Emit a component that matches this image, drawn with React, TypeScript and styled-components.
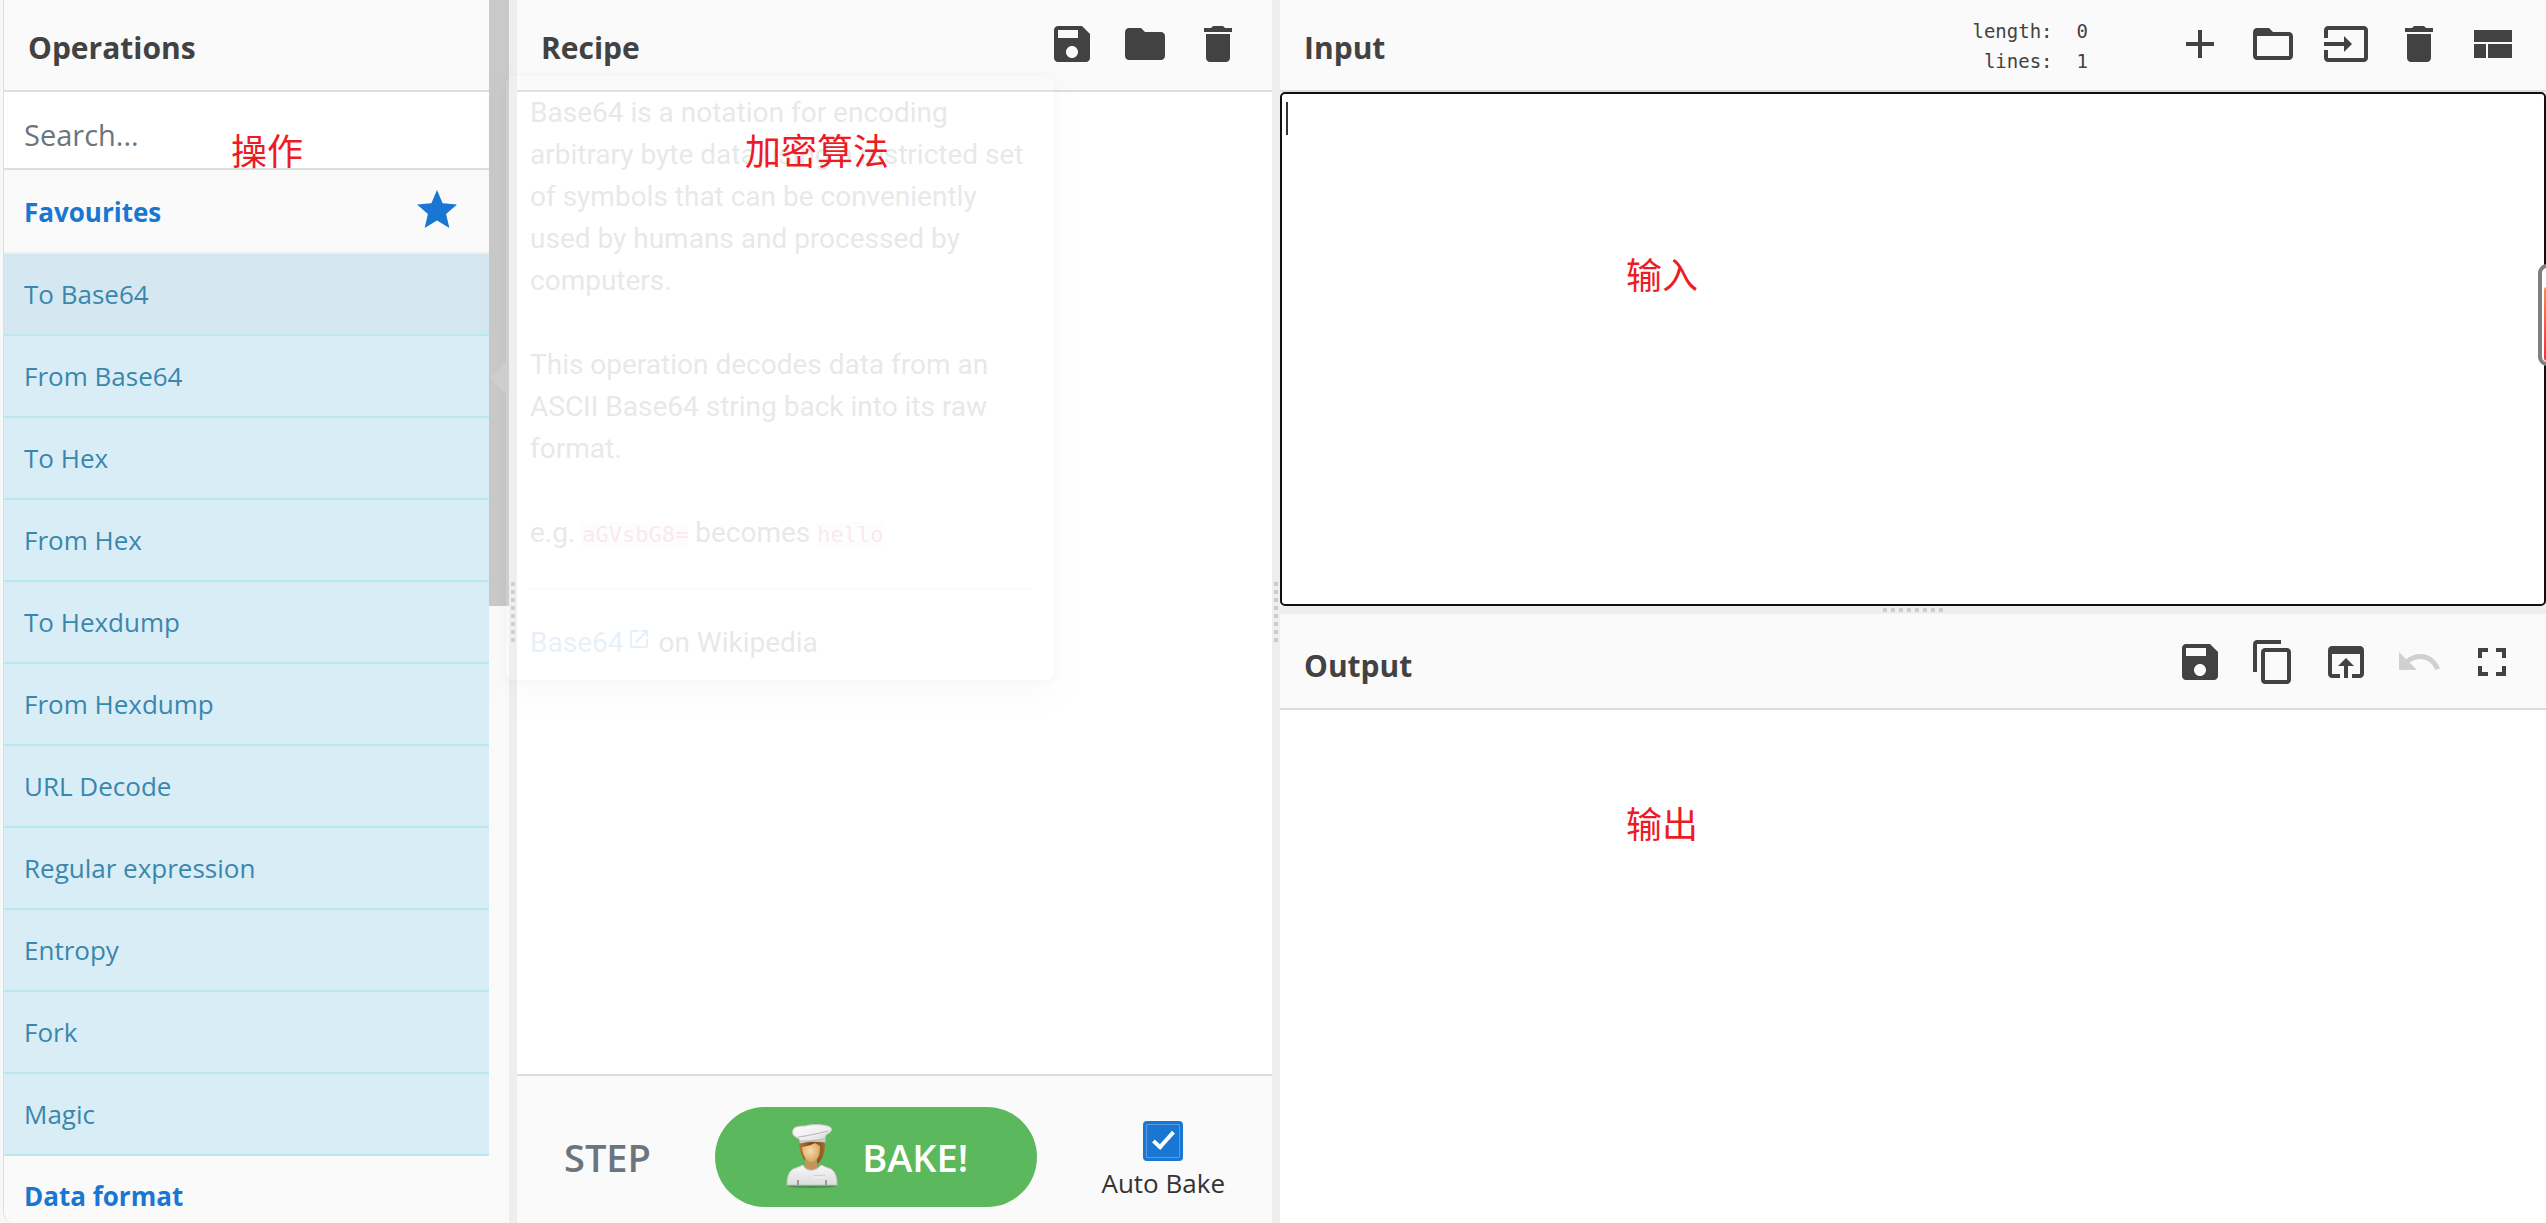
import React from "react";
import styled, { createGlobalStyle, css } from "styled-components";

const SANS = '"Open Sans", "Noto Sans", "Noto Sans CJK SC", sans-serif';
const MONO = '"DejaVu Sans Mono", "Liberation Mono", monospace';

const GlobalStyle = createGlobalStyle`
  *, *::before, *::after { box-sizing: border-box; }
  body { margin: 0; background: #f8f8f8; font-family: ${SANS}; color: #424242; }
  button, input, textarea { font-family: inherit; }
`;

/* ---------- icons ---------- */

const paths = {
  save: "M17 3H5c-1.11 0-2 .9-2 2v14c0 1.1.89 2 2 2h14c1.1 0 2-.9 2-2V7l-4-4zm-5 16c-1.66 0-3-1.34-3-3s1.34-3 3-3 3 1.34 3 3-1.34 3-3 3zm3-10H5V5h10v4z",
  folder: "M10 4H4c-1.1 0-1.99.9-1.99 2L2 18c0 1.1.9 2 2 2h16c1.1 0 2-.9 2-2V8c0-1.1-.9-2-2-2h-8l-2-2z",
  trash: "M6 19c0 1.1.9 2 2 2h8c1.1 0 2-.9 2-2V7H6v12zM19 4h-3.5l-1-1h-5l-1 1H5v2h14V4z",
  add: "M19 13h-6v6h-2v-6H5v-2h6V5h2v6h6v2z",
  folderOpen: "M20 6h-8l-2-2H4c-1.1 0-1.99.9-1.99 2L2 18c0 1.1.9 2 2 2h16c1.1 0 2-.9 2-2V8c0-1.1-.9-2-2-2zm0 12H4V8h16v10z",
  input: "M21 3.01H3c-1.1 0-2 .9-2 2V9h2V4.99h18v14.03H3V15H1v4.01c0 1.1.9 1.98 2 1.98h18c1.1 0 2-.88 2-1.98v-14c0-1.11-.9-2-2-2zM11 16l4-4-4-4v3H1v2h10v3z",
  layout: "M3 19h6v-7H3v7zm7 0h12v-7H10v7zM3 5v6h19V5H3z",
  copy: "M16 1H4c-1.1 0-2 .9-2 2v14h2V3h12V1zm3 4H8c-1.1 0-2 .9-2 2v14c0 1.1.9 2 2 2h11c1.1 0 2-.9 2-2V7c0-1.1-.9-2-2-2zm0 16H8V7h11v14z",
  openInBrowser: "M19 4H5c-1.11 0-2 .9-2 2v12c0 1.1.89 2 2 2h4v-2H5V8h14v10h-4v2h4c1.1 0 2-.9 2-2V6c0-1.1-.89-2-2-2zm-7 6l-4 4h3v6h2v-6h3l-4-4z",
  undo: "M12.5 8c-2.65 0-5.05.99-6.9 2.6L2 7v9h9l-3.62-3.62c1.39-1.16 3.16-1.88 5.12-1.88 3.54 0 6.55 2.31 7.6 5.5l2.37-.78C21.08 11.03 17.15 8 12.5 8z",
  fullscreen: "M7 14H5v5h5v-2H7v-3zm-2-4h2V7h3V5H5v5zm12 7h-3v2h5v-5h-2v3zM14 5v2h3v3h2V5h-5z",
  star: "M12 17.27L18.18 21l-1.64-7.03L22 9.24l-7.19-.61L12 2 9.19 8.63 2 9.24l5.46 4.73L5.82 21z",
  external: "M19 19H5V5h7V3H5c-1.11 0-2 .9-2 2v14c0 1.1.89 2 2 2h14c1.1 0 2-.9 2-2v-7h-2v7zM14 3v2h3.59l-9.83 9.83 1.41 1.41L19 6.41V10h2V3h-7z",
};

type IconName = keyof typeof paths;

const Icon = ({ name, size = 48 }: { name: IconName; size?: number }) => (
  <svg width={size} height={size} viewBox="0 0 24 24" fill="currentColor" aria-hidden="true">
    <path d={paths[name]} />
  </svg>
);

const Chef = () => (
  <svg width="56" height="68" viewBox="0 0 56 68" aria-hidden="true">
    <defs>
      <linearGradient id="hat" x1="0" y1="0" x2="1" y2="1">
        <stop offset="0" stopColor="#ffffff" />
        <stop offset="0.6" stopColor="#ececec" />
        <stop offset="1" stopColor="#bdbdbd" />
      </linearGradient>
      <linearGradient id="hair" x1="0" y1="0" x2="1" y2="0">
        <stop offset="0" stopColor="#b8793a" />
        <stop offset="0.5" stopColor="#7a4413" />
        <stop offset="1" stopColor="#a5672a" />
      </linearGradient>
      <radialGradient id="face" cx="0.45" cy="0.4" r="0.7">
        <stop offset="0" stopColor="#f9dda6" />
        <stop offset="1" stopColor="#cf9d57" />
      </radialGradient>
      <linearGradient id="coat" x1="0" y1="0" x2="0" y2="1">
        <stop offset="0" stopColor="#f8f8f9" />
        <stop offset="1" stopColor="#dcdcdf" />
      </linearGradient>
    </defs>
    <ellipse cx="28" cy="63" rx="25" ry="2" fill="#2e6b2e" opacity="0.5" />
    <path d="M15 18h25c2 6 0 14-3 19-2 3-4 4-7 4h-5c-6-3-10-12-10-23z" fill="url(#hair)" />
    <path d="M21 34h12v9l4 3-9 6-10-6 3-3z" fill="#c4935a" />
    <path d="M18 24c5-1 10-2 13-4l5 3c0 8-1 12-5 15-3 2-6 1-8-1-3-3-5-8-5-13z" fill="url(#face)" />
    <path d="M3 62c0-10 3-16 9-17l7-3c3 7 13 7 18 0l7 3c6 1 9 7 9 17z" fill="url(#coat)" stroke="#c9c9cc" strokeWidth="1" />
    <path d="M14 57v5M42 57v5" stroke="#9a9a9e" strokeWidth="2" fill="none" />
    <path d="M30 53h11" stroke="#b9b9be" strokeWidth="1" />
    <path d="M30 54h11" stroke="#ffffff" strokeWidth="1" />
    <path d="M9 7c1-4 8-4 12-4 7-2 19-2 25 1 3 2 1 5-1 6-4 2-4 4-4 9-8-1-17-1-25 1 0-4-1-4-4-6-3-1-4-4-3-7z" fill="url(#hat)" stroke="#c8c8c8" strokeWidth="1" />
    <path d="M14 14c9-1 18-3 30-6M16 18c8 0 16 0 24-2" stroke="#b4b4b4" strokeWidth="1" fill="none" />
  </svg>
);

/* ---------- layout ---------- */

const Workspace = styled.main`
  position: relative;
  display: grid;
  grid-template-columns: minmax(0, 509fr) 8px minmax(0, 755fr) 8px minmax(0, 1266fr);
  height: 100vh;
  overflow: hidden;
`;

const Gutter = styled.div<{ $horizontal?: boolean }>`
  display: flex;
  align-items: center;
  justify-content: center;
  background: #eee;
  &::before {
    content: "";
    ${(p) =>
      p.$horizontal
        ? css`
            width: 60px;
            height: 4px;
            background: repeating-linear-gradient(to right, #ccc 0 4px, transparent 4px 8px);
          `
        : css`
            width: 4px;
            height: 60px;
            background: repeating-linear-gradient(to bottom, #ccc 0 4px, transparent 4px 8px);
          `}
  }
`;

const Header = styled.header<{ $tall?: boolean }>`
  display: flex;
  flex: none;
  align-items: flex-end;
  gap: 88px;
  height: ${(p) => (p.$tall ? 96 : 92)}px;
  padding: 0 30px 22px 24px;
  background: #fafafa;
  border-bottom: 2px solid #ddd;
`;

const Title = styled.h1`
  flex: 1;
  margin: 0;
  font-size: 30px;
  line-height: 40px;
  font-weight: 700;
  color: #424242;
`;

const Toolbar = styled.div`
  display: flex;
  gap: 25px;
`;

const IconButton = styled.button`
  display: flex;
  padding: 0;
  border: 0;
  background: none;
  color: #424242;
  &:disabled {
    color: #d0d0d0;
  }
`;

const Note = styled.span<{ $x: string; $y: string }>`
  position: absolute;
  left: ${(p) => p.$x};
  top: ${(p) => p.$y};
  font-family: "Noto Sans CJK SC", sans-serif;
  font-size: 36px;
  line-height: 40px;
  font-weight: 400;
  white-space: nowrap;
  color: #ed1c24;
  pointer-events: none;
`;

/* ---------- operations ---------- */

const OperationsPane = styled.section`
  position: relative;
  display: flex;
  min-height: 0;
  margin-left: 3px;
  overflow: hidden;
  background: #fafafa;
  border-left: 1px solid #ddd;
  border-bottom-left-radius: 12px;
`;

const OperationsBody = styled.div`
  flex: 1;
  min-width: 0;
`;

const Scrollbar = styled.div`
  width: 20px;
  background: #fafafa;
  &::before {
    content: "";
    display: block;
    height: 606px;
    background: #c9c9c9;
  }
`;

const Search = styled.input`
  display: block;
  width: 100%;
  height: 78px;
  margin-bottom: 2px;
  padding: 8px 20px 0;
  border: 0;
  border-bottom: 2px solid #ddd;
  background: #fff;
  font-size: 29px;
  outline: 0;
  &::placeholder {
    color: #6c757d;
    opacity: 1;
  }
`;

const Category = styled.a`
  display: flex;
  align-items: center;
  justify-content: space-between;
  height: 82px;
  padding: 0 28px 0 20px;
  border-bottom: 2px solid #eee;
  background: #fafafa;
  font-size: 26px;
  font-weight: 700;
  color: #1976d2;
  text-decoration: none;
  svg {
    margin-bottom: 4px;
  }
`;

const OperationList = styled.ul`
  margin: 0;
  padding: 0;
  list-style: none;
`;

const Operation = styled.li<{ $hovered?: boolean }>`
  height: 82px;
  padding: 0 20px;
  border-bottom: 2px solid #b9e8ef;
  background: ${(p) => (p.$hovered ? "#d5e7f1" : "#d9edf7")};
  font-size: 26px;
  line-height: 80px;
  color: #3a87ad;
`;

/* ---------- recipe ---------- */

const RecipePane = styled.section`
  position: relative;
  display: flex;
  flex-direction: column;
  min-height: 0;
  background: #fff;
`;

const RecipeArea = styled.div`
  flex: 1;
`;

const Controls = styled.div`
  display: flex;
  align-items: center;
  justify-content: space-between;
  height: 149px;
  padding: 14px 47px 0;
  border-top: 2px solid #ddd;
  background: #fafafa;
`;

const StepButton = styled.button`
  padding: 0;
  border: 0;
  background: none;
  font-size: 38px;
  font-weight: 600;
  color: #6c757d;
`;

const BakeButton = styled.button`
  display: flex;
  align-items: center;
  justify-content: center;
  gap: 22px;
  width: 322px;
  height: 100px;
  border: 0;
  border-radius: 50px;
  background: #5cb85c;
  font-size: 38px;
  font-weight: 600;
  color: #fff;
`;

const AutoBake = styled.label`
  display: flex;
  flex-direction: column;
  align-items: center;
  padding-top: 12px;
  font-size: 26px;
  line-height: 44px;
  color: #333;
`;

const Checkbox = styled.input`
  appearance: none;
  display: grid;
  place-items: center;
  width: 40px;
  height: 40px;
  margin: 0;
  border: 3px solid #1976d2;
  border-radius: 4px;
  background: #1976d2;
  box-shadow: inset 0 0 0 1px #5a9bdf;
  &:checked::before {
    content: "";
    width: 11px;
    height: 22px;
    margin-bottom: 6px;
    border: solid #fff;
    border-width: 0 4px 4px 0;
    transform: rotate(42deg);
  }
`;

/* ---------- operation help ---------- */

const Popover = styled.aside`
  position: absolute;
  left: 506px;
  top: 76px;
  width: 548px;
  padding: 16px 24px;
  border-radius: 8px;
  background: #fff;
  box-shadow: 0 0 4px 2px rgba(0, 0, 0, 0.14), 0 12px 24px rgba(0, 0, 0, 0.2);
  opacity: 0.1;
  font-family: Roboto, sans-serif;
  font-size: 28px;
  line-height: 42px;
  color: #212529;
  &::before {
    content: "";
    position: absolute;
    left: -16px;
    top: 286px;
    border: 16px solid transparent;
    border-left: 0;
    border-right-color: #fff;
  }
  p {
    margin: 0 0 42px;
  }
  code {
    background: #f5f5f5;
    font-family: ${MONO};
    font-size: 22px;
    color: #e91e63;
  }
  hr {
    margin: 32px 0;
    border: 0;
    border-top: 2px solid #ddd;
  }
  a {
    color: #1976d2;
    text-decoration: none;
  }
  a svg {
    margin-left: 4px;
    vertical-align: 1px;
  }
`;

/* ---------- input / output ---------- */

const IOColumn = styled.div`
  display: grid;
  grid-template-rows: minmax(0, 606fr) 8px minmax(0, 609fr);
  min-height: 0;
`;

const IOPane = styled.section`
  position: relative;
  display: flex;
  flex-direction: column;
  min-height: 0;
  background: #fff;
`;

const Stats = styled.dl`
  display: grid;
  grid-template-columns: auto auto;
  column-gap: 24px;
  margin: 0 0 -8px;
  font-family: ${MONO};
  font-size: 19px;
  line-height: 30px;
  text-align: right;
  dd {
    margin: 0;
  }
`;

const Editor = styled.div`
  position: relative;
  display: flex;
  flex: 1;
`;

const InputText = styled.textarea`
  flex: 1;
  padding: 8px 4px;
  border: 2px solid #101010;
  border-radius: 5px;
  background: #fff;
  font-family: ${MONO};
  font-size: 24px;
  resize: none;
  outline: 0;
`;

const Caret = styled.i`
  position: absolute;
  left: 6px;
  top: 10px;
  width: 2px;
  height: 33px;
  background: #333;
`;

const OutputText = styled.output`
  flex: 1;
`;

const Meter = styled.div`
  position: absolute;
  right: -10px;
  top: 264px;
  width: 18px;
  height: 102px;
  padding: 19px 2px 1px;
  border: 4px solid #808080;
  border-radius: 10px;
  background: #fff;
  &::before {
    content: "";
    display: block;
    height: 74px;
    border-radius: 3px;
    background: linear-gradient(#ff8a4a, #ff2a3f);
  }
`;

const operations = [
  "To Base64",
  "From Base64",
  "To Hex",
  "From Hex",
  "To Hexdump",
  "From Hexdump",
  "URL Decode",
  "Regular expression",
  "Entropy",
  "Fork",
  "Magic",
];

const Actions = ({ items, disabled }: { items: [IconName, string][]; disabled?: IconName }) => (
  <Toolbar>
    {items.map(([name, label]) => (
      <IconButton key={name} type="button" aria-label={label} disabled={name === disabled}>
        <Icon name={name} />
      </IconButton>
    ))}
  </Toolbar>
);

export default function App() {
  return (
    <>
      <GlobalStyle />
      <Workspace>
        <OperationsPane>
          <OperationsBody>
            <Header>
              <Title>Operations</Title>
            </Header>
            <Search type="search" placeholder="Search..." aria-label="Search operations" />
            <Category href="#favourites">
              Favourites
              <Icon name="star" />
            </Category>
            <OperationList>
              {operations.map((name, i) => (
                <Operation key={name} $hovered={i === 0}>
                  {name}
                </Operation>
              ))}
            </OperationList>
            <Category href="#data-format">Data format</Category>
          </OperationsBody>
          <Scrollbar />
          <Note $x="227px" $y="129px">操作</Note>
        </OperationsPane>

        <Gutter />

        <RecipePane>
          <Header>
            <Title>Recipe</Title>
            <Actions items={[["save", "Save recipe"], ["folder", "Load recipe"], ["trash", "Clear recipe"]]} />
          </Header>
          <RecipeArea />
          <Controls>
            <StepButton type="button">STEP</StepButton>
            <BakeButton type="button">
              <Chef />
              BAKE!
            </BakeButton>
            <AutoBake>
              <Checkbox type="checkbox" defaultChecked />
              Auto Bake
            </AutoBake>
          </Controls>
        </RecipePane>

        <Gutter />

        <IOColumn>
          <IOPane>
            <Header>
              <Title>Input</Title>
              <Stats>
                <dt>length:</dt>
                <dd>0</dd>
                <dt>lines:</dt>
                <dd>1</dd>
              </Stats>
              <Actions
                items={[
                  ["add", "Add input tab"],
                  ["folderOpen", "Open folder"],
                  ["input", "Open file"],
                  ["trash", "Clear input"],
                  ["layout", "Reset layout"],
                ]}
              />
            </Header>
            <Editor>
              <InputText aria-label="Input" />
              <Caret />
            </Editor>
            <Note $x="346px" $y="253px">输入</Note>
            <Meter />
          </IOPane>
          <Gutter $horizontal />
          <IOPane>
            <Header $tall>
              <Title>Output</Title>
              <Actions
                disabled="undo"
                items={[
                  ["save", "Save output"],
                  ["copy", "Copy output"],
                  ["openInBrowser", "Replace input"],
                  ["undo", "Undo"],
                  ["fullscreen", "Maximise output"],
                ]}
              />
            </Header>
            <OutputText aria-label="Output" />
            <Note $x="346px" $y="188px">输出</Note>
          </IOPane>
        </IOColumn>

        <Popover>
          <p>
            Base64 is a notation for encoding arbitrary byte data using a restricted set of symbols that can be
            conveniently used by humans and processed by computers.
          </p>
          <p>This operation decodes data from an ASCII Base64 string back into its raw format.</p>
          <div>
            e.g. <code>aGVsbG8=</code> becomes <code>hello</code>
          </div>
          <hr />
          <div>
            <a href="#base64">
              Base64
              <Icon name="external" size={24} />
            </a>{" "}
            on Wikipedia
          </div>
        </Popover>
        <Note $x="745px" $y="129px">加密算法</Note>
      </Workspace>
    </>
  );
}
